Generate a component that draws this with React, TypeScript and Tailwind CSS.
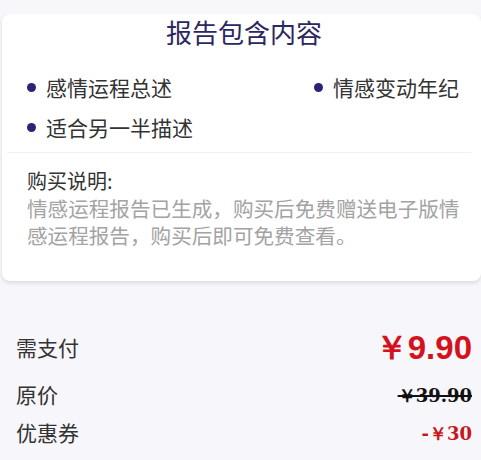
const items = ["感情运程总述", "情感变动年纪", "适合另一半描述"]

function Bullet({ text }: { text: string }) {
  return (
    <div className="flex items-center h-[30px] whitespace-nowrap">
      <span className="w-[9px] h-[9px] rounded-full bg-[#2e2277] mr-[10px]" />
      <span className="text-[21px] leading-[30px] text-[#333]">{text}</span>
    </div>
  )
}

export default function App() {
  return (
    <div
      className="w-[481px] h-[460px] overflow-hidden bg-[#f7f6fa] pt-[14px]"
      style={{ fontFamily: '"Noto Sans CJK SC", "Noto Sans", sans-serif' }}
    >
      {/* report card */}
      <div className="ml-[2px] h-[267px] bg-white rounded-lg shadow-[0_2px_4px_rgba(0,0,0,0.12)] pl-[25px] pr-[10px]">
        <h2 className="text-center text-[26px] leading-[36px] text-[#2b2760] pr-[10px]">报告包含内容</h2>

        <div className="grid grid-cols-[287px_auto] gap-y-[10px] mt-[22px]">
          <Bullet text={items[0]} />
          <Bullet text={items[1]} />
          <Bullet text={items[2]} />
        </div>

        <div className="h-px bg-[#f1f0f4] mt-[10px] -ml-[20px] mr-[0px]" />

        <div className="mt-[14px] text-[20px] leading-[28px] text-[#333]">购买说明:</div>
        <p className="w-[440px] text-[20.6px] leading-[27px] text-[#a3a3a3]">
          情感运程报告已生成，购买后免费赠送电子版情感运程报告，购买后即可免费查看。
        </p>
      </div>

      {/* payment */}
      <div className="mt-[47px] pl-[16px] pr-[9px]">
        <div className="flex items-center justify-between h-[40px]">
          <span className="text-[21px] text-[#333]">需支付</span>
          <span
            className="text-[#d3121b] font-bold text-[33px] leading-[40px]"
            style={{ fontFamily: '"Liberation Sans", Arial, sans-serif' }}
          >
            ￥9.90
          </span>
        </div>
        <div className="flex items-center justify-between h-[40px] mt-[7px]">
          <span className="text-[21px] text-[#333]">原价</span>
          <span
            className="text-[#111] font-bold text-[18px] line-through decoration-2"
            style={{ fontFamily: '"DejaVu Serif", serif' }}
          >
            ￥39.90
          </span>
        </div>
        <div className="flex items-center justify-between h-[36px]">
          <span className="text-[21px] text-[#333]">优惠券</span>
          <span
            className="text-[#c8161d] font-bold text-[18px]"
            style={{ fontFamily: '"DejaVu Serif", serif' }}
          >
            -￥30
          </span>
        </div>
      </div>
    </div>
  )
}
